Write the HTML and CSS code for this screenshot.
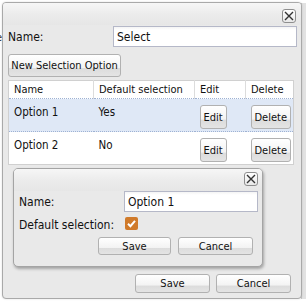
FILE: index.html
```html
<html lang="en"><head>
    <meta charset="UTF-8">
    <title>Selection Options</title>
    <link rel="stylesheet" href="styles.css">
  </head>
  <body>
    <!-- Page behind the dialogs -->
    <div class="backdrop">
      <span class="backdrop-text">e</span>
      <div class="backdrop-strip"></div>
    </div>

    <!-- Main Window -->
    <div class="window main-window">
      <div class="window-header">
        <span class="tool-close">
          <svg width="10" height="10" viewBox="0 0 10 10"><path d="M1 1 L9 9 M9 1 L1 9" stroke="#333" stroke-width="1.4" fill="none"/></svg>
        </span>
      </div>
      <div class="window-body">
        <div class="field-row">
          <label for="selName">Name:</label>
          <input type="text" id="selName" value="Select">
        </div>
        <div class="toolbar">
          <button class="btn btn-tall">New Selection Option</button>
        </div>
        <table class="grid">
          <thead>
            <tr>
              <th class="col-name">Name</th>
              <th class="col-default">Default selection</th>
              <th class="col-edit">Edit</th>
              <th class="col-delete">Delete</th>
            </tr>
          </thead>
          <tbody>
            <tr class="selected">
              <td>Option 1</td>
              <td>Yes</td>
              <td><button class="btn btn-cell">Edit</button></td>
              <td><button class="btn btn-cell">Delete</button></td>
            </tr>
            <tr>
              <td>Option 2</td>
              <td>No</td>
              <td><button class="btn btn-cell">Edit</button></td>
              <td><button class="btn btn-cell">Delete</button></td>
            </tr>
          </tbody>
        </table>
      </div>
      <div class="window-footer">
        <button class="btn btn-save">Save</button>
        <button class="btn btn-cancel">Cancel</button>
      </div>
    </div>

    <!-- Option Edit Window -->
    <div class="window sub-window">
      <div class="window-header sub-header">
        <span class="tool-close">
          <svg width="10" height="10" viewBox="0 0 10 10"><path d="M1 1 L9 9 M9 1 L1 9" stroke="#333" stroke-width="1.4" fill="none"/></svg>
        </span>
      </div>
      <div class="sub-body">
        <div class="field-row">
          <label for="optName">Name:</label>
          <input type="text" id="optName" value="Option 1">
        </div>
        <div class="check-row">
          <label>Default selection:</label>
          <span class="checkbox">
            <svg width="13" height="13" viewBox="0 0 13 13"><path d="M3 6.8 L5.4 9.2 L10 3.8" stroke="#fff" stroke-width="2" fill="none"/></svg>
          </span>
        </div>
        <div class="sub-buttons">
          <button class="btn btn-small btn-sub-save">Save</button>
          <button class="btn btn-small btn-sub-cancel">Cancel</button>
        </div>
      </div>
    </div>
  </body></html>
```

FILE: styles.css
```css
/* General Styling */
body {
  margin: 0;
  padding: 0;
  width: 306px;
  height: 305px;
  overflow: hidden;
  background: #ffffff;
  font-family: "DejaVu Sans Condensed", "DejaVu Sans", sans-serif;
  font-size: 11px;
  color: #111;
  position: relative;
}

/* Page behind */
.backdrop-text {
  position: absolute;
  left: -4px;
  top: 31px;
  color: #333;
}

.backdrop-strip {
  position: absolute;
  left: 301px;
  top: 3px;
  width: 5px;
  height: 296px;
  background: #e2e2e2;
  border-left: 1px solid #c8c8c8;
}

/* Window */
.window {
  position: absolute;
  box-sizing: border-box;
  border: 1px solid #a9a9a9;
  border-radius: 4px;
  background: #e9e9e9;
  display: flex;
  flex-direction: column;
}

.main-window {
  left: 2px;
  top: 2px;
  width: 300px;
  height: 297px;
  box-shadow: 0 0 2px rgba(0, 0, 0, 0.15);
}

.window-header {
  height: 22px;
  flex: none;
  display: flex;
  justify-content: flex-end;
  align-items: flex-start;
  padding: 6px 5px 0 0;
  box-sizing: border-box;
  border-radius: 3px 3px 0 0;
  background: linear-gradient(to bottom, #f6f6f6 0%, #ececec 50%, #e6e6e6 100%);
}

.tool-close {
  width: 14px;
  height: 14px;
  box-sizing: border-box;
  border: 1px solid #8e8e8e;
  border-radius: 3px;
  background: linear-gradient(to bottom, #ffffff, #e8e8e8);
  display: flex;
  align-items: center;
  justify-content: center;
}

.window-body {
  padding: 1px 4px 0 5px;
}

/* Form rows */
.field-row {
  display: flex;
  align-items: center;
}

.field-row label {
  width: 105px;
  flex: none;
  font-size: 12px;
}

.field-row input {
  flex: 1;
  width: 0;
  min-width: 0;
  height: 21px;
  box-sizing: border-box;
  border: 1px solid #b5b8c8;
  padding: 0 3px;
  font-family: inherit;
  font-size: 12px;
  color: #111;
  background: linear-gradient(to bottom, #f4f4f4 0px, #ffffff 3px);
}

.toolbar {
  margin-top: 7px;
}

/* Buttons */
.btn {
  box-sizing: border-box;
  border: 1px solid #b1b1b1;
  border-radius: 3px;
  padding: 0;
  font-family: inherit;
  font-size: 11px;
  color: #111;
  background: linear-gradient(to bottom, #ffffff 0%, #f3f3f3 60%, #dcdcdc 64%, #e4e4e4 100%);
  cursor: pointer;
}

.btn-tall {
  width: 113px;
  height: 23px;
}

.btn-cell {
  height: 24px;
  padding: 0 3px;
}

.btn-save,
.btn-cancel {
  width: 75px;
  height: 19px;
}

.btn-small {
  height: 18px;
}

.btn-sub-save {
  width: 73px;
}

.btn-sub-cancel {
  width: 75px;
}

/* Grid */
.grid {
  margin-top: 3px;
  width: 286px;
  border-collapse: collapse;
  background: #ffffff;
  border: 1px solid #d0d0d0;
  table-layout: fixed;
  font-family: inherit;
  font-size: 11px;
  color: #111;
}

.grid th {
  height: 18px;
  padding: 0 5px;
  text-align: left;
  font-weight: normal;
  border-right: 1px solid #dcdcdc;
  border-bottom: 1px dotted #9fb2d3;
}

.grid th:last-child {
  border-right: none;
}

.col-name { width: 74px; }
.col-default { width: 90px; }
.col-edit { width: 40px; }

.grid td {
  height: 33px;
  padding: 6px 5px 0 5px;
  vertical-align: top;
  box-sizing: border-box;
  font-size: 11.5px;
}

.grid tr.selected td {
  background: #dfe8f6;
  border-bottom: 1px dotted #9fb2d3;
}

/* Footer */
.window-footer {
  margin-top: auto;
  display: flex;
  justify-content: flex-end;
  gap: 6px;
  padding: 0 10px 5px 0;
}

/* Sub window */
.sub-window {
  left: 13px;
  top: 168px;
  width: 250px;
  height: 99px;
  border-color: #a4a4a4;
  border-radius: 5px;
  box-shadow: 1px 2px 3px rgba(0, 0, 0, 0.3);
}

.sub-header {
  height: 22px;
  padding: 3px 4px 0 0;
  border-radius: 4px 4px 0 0;
}

.sub-body {
  padding: 0 4px 0 5px;
}

.check-row {
  display: flex;
  align-items: center;
  height: 23px;
}

.check-row label {
  width: 106px;
  flex: none;
  font-size: 12px;
  padding-top: 2px;
}

.checkbox {
  width: 13px;
  height: 13px;
  border-radius: 2px;
  background: #d07a2a;
  display: flex;
}

.sub-buttons {
  display: flex;
  justify-content: flex-end;
  gap: 7px;
  padding-right: 5px;
  margin-top: 2px;
}
```
